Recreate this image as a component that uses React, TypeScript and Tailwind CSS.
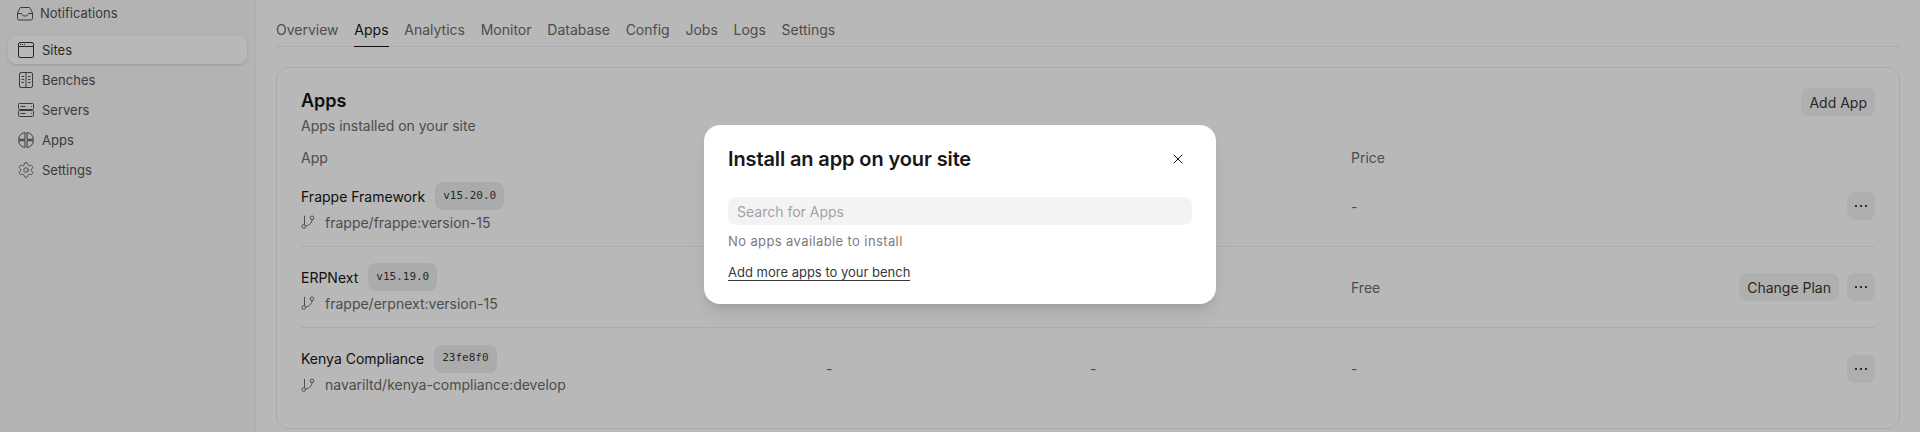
import { Settings, X } from 'lucide-react';

const tabs = ['Overview', 'Apps', 'Analytics', 'Monitor', 'Database', 'Config', 'Jobs', 'Logs', 'Settings'];

const apps = [
  { name: 'Frappe Framework', tag: 'v15.20.0', repo: 'frappe/frappe:version-15', middle: '', price: '-', changePlan: false },
  { name: 'ERPNext', tag: 'v15.19.0', repo: 'frappe/erpnext:version-15', middle: '', price: 'Free', changePlan: true },
  { name: 'Kenya Compliance', tag: '23fe8f0', repo: 'navariltd/kenya-compliance:develop', middle: '-', price: '-', changePlan: false },
];

const InboxIcon = () => (
  <svg width="16" height="16" viewBox="0 0 16 16" fill="none" stroke="currentColor" strokeWidth="1">
    <path d="M4 1.500h8c.6 0 1 .3 1.300.8L15.500 7v5.500a1.500 1.500 0 0 1-1.500 1.500H2a1.500 1.500 0 0 1-1.500-1.500V7l2.200-4.700c.3-.5.7-.8 1.300-.8z" />
    <path d="M.5 7.500h4c.5 1.700 1.800 2.500 3.500 2.500s3-.8 3.500-2.500h4" />
  </svg>
);

const SiteIcon = () => (
  <svg width="16" height="16" viewBox="0 0 16 16" fill="none" stroke="currentColor" strokeWidth="1">
    <rect x="0.500" y="0.500" width="15" height="15" rx="1.500" />
    <path d="M.5 4.500h15" />
    <path d="M2 2.500h1M4 2.500h1M6 2.500h1" />
  </svg>
);

const BenchIcon = () => (
  <svg width="16" height="16" viewBox="0 0 16 16" fill="none" stroke="currentColor" strokeWidth="1">
    <rect x="1.500" y="0.500" width="13" height="15" rx="1.500" />
    <path d="M8 .5v15M3.500 4.500h2.500M3.500 7.500h2.500M3.500 10.500h2.500M10 4.500h2.500M10 7.500h2.500M10 10.500h2.500" />
  </svg>
);

const ServerIcon = () => (
  <svg width="16" height="16" viewBox="0 0 16 16" fill="none" stroke="currentColor" strokeWidth="1">
    <rect x="0.500" y="1.500" width="15" height="6" rx="1" />
    <rect x="0.500" y="8.500" width="15" height="6" rx="1" />
    <path d="M2.500 4.500h5M2.500 11.500h5M13 4.500h.8M13 11.500h.8" />
  </svg>
);

const AppsIcon = () => (
  <svg width="16" height="16" viewBox="0 0 16 16" fill="none" stroke="currentColor" strokeWidth="1">
    <path d="M7 .6A7.500 7.500 0 0 0 .6 7.300H7z" />
    <path d="M9 .6a7.500 7.500 0 0 1 6.400 6.700H9z" />
    <path d="M7 15.400A7.500 7.500 0 0 1 .6 8.700H7z" />
    <path d="M9 15.400a7.500 7.500 0 0 0 6.400-6.700H9z" />
  </svg>
);

const BranchIcon = () => (
  <svg width="14" height="14" viewBox="0 0 14 14" fill="none" stroke="currentColor" strokeWidth="1">
    <circle cx="2.800" cy="11.500" r="1.800" />
    <circle cx="11" cy="2.800" r="1.800" />
    <path d="M3.500 .8v9" />
    <path d="M11 4.600c0 3.200-2 5.400-6.400 6.500" />
  </svg>
);

const DotsIcon = () => (
  <svg width="16" height="16" viewBox="0 0 16 16" fill="currentColor">
    <circle cx="3" cy="8" r="1.100" />
    <circle cx="8" cy="8" r="1.100" />
    <circle cx="13" cy="8" r="1.100" />
  </svg>
);

const nav = [
  { label: 'Sites', icon: <SiteIcon />, active: true },
  { label: 'Benches', icon: <BenchIcon />, active: false },
  { label: 'Servers', icon: <ServerIcon />, active: false },
  { label: 'Apps', icon: <AppsIcon />, active: false },
  { label: 'Settings', icon: <Settings size={18} strokeWidth={1.1} className="-mx-[1px]" />, active: false },
];

export default function App() {
  return (
    <div className="relative flex h-[432px] w-full overflow-hidden bg-white font-['Inter',sans-serif] text-[14px] text-[#383838]">
      <aside className="w-[256px] shrink-0 border-r border-[#f3f3f3] bg-[#f8f8f8] px-2 text-[13px]">
        <div className="flex h-[28px] items-center gap-[7px] pl-[9px] text-[#525252]">
          <InboxIcon />
          <span>Notifications</span>
        </div>
        <nav className="mt-[8px] flex flex-col gap-[2px]">
          {nav.map((item) => (
            <div
              key={item.label}
              className={
                item.active
                  ? 'flex h-[28px] items-center gap-2 rounded-lg bg-white pl-[10px] text-[#383838] shadow-sm'
                  : 'flex h-[28px] items-center gap-2 pl-[10px] text-[#525252]'
              }
            >
              {item.icon}
              <span className="pt-[1px]">{item.label}</span>
            </div>
          ))}
        </nav>
      </aside>

      <main className="min-w-0 flex-1 pl-[20px] pr-[20px] pt-[15px]">
        <div className="flex h-[32px] gap-[15.75px] border-b border-[#ededed]">
          {tabs.map((tab) => (
            <div
              key={tab}
              className={
                tab === 'Apps'
                  ? 'h-[32px] border-b border-[#171717] pt-[6px] leading-[18px] text-[#171717]'
                  : 'h-[32px] pt-[6px] leading-[18px] text-[#6b6b6b]'
              }
            >
              {tab}
            </div>
          ))}
        </div>

        <section className="mt-[20px] h-[362px] rounded-xl border border-[#ededed] px-[24px] pt-[20px]">
          <div className="flex items-start justify-between">
            <div className="pt-[1px]">
              <h2 className="text-lg font-semibold leading-[24px] text-[#171717]">Apps</h2>
              <p className="mt-[4px] leading-[18px] text-[#6b6b6b]">Apps installed on your site</p>
            </div>
            <button className="flex h-[28px] items-center rounded-lg bg-[#f3f3f3] px-2 text-[#383838]">Add App</button>
          </div>

          <div className="mt-[15px] grid h-[16px] grid-cols-[525px_264px_261px_1fr] items-center leading-[16px] text-[#6b6b6b]">
            <span>App</span>
            <span />
            <span />
            <span>Price</span>
          </div>

          <div>
            {apps.map((app) => (
              <div
                key={app.name}
                className="grid h-[81px] grid-cols-[525px_264px_261px_1fr] items-center border-b border-[#ededed] last:border-b-0"
              >
                <div className="pt-[2px]">
                  <div className="flex items-center gap-[10px] text-[#171717]">
                    <span>{app.name}</span>
                    <span className="flex h-[28px] items-center rounded-lg bg-[#ededed] px-2 font-['DejaVu_Sans_Mono',monospace] text-[11px] text-[#383838]">
                      {app.tag}
                    </span>
                  </div>
                  <div className="mt-[2px] flex h-[20px] items-center gap-[10px] text-[#6b6b6b]">
                    <BranchIcon />
                    <span>{app.repo}</span>
                  </div>
                </div>
                <span className="text-[#6b6b6b]">{app.middle}</span>
                <span className="text-[#6b6b6b]">{app.middle}</span>
                <div className="flex items-center justify-between">
                  <span className="text-[#6b6b6b]">{app.price}</span>
                  <div className="flex gap-2">
                    {app.changePlan && (
                      <button className="flex h-[28px] items-center rounded-lg bg-[#f3f3f3] px-2 text-[#383838]">Change Plan</button>
                    )}
                    <button className="flex h-[28px] w-[28px] items-center justify-center rounded-lg bg-[#f3f3f3] text-[#171717]">
                      <DotsIcon />
                    </button>
                  </div>
                </div>
              </div>
            ))}
          </div>
        </section>
      </main>

      {/* dialog backdrop */}
      <div className="absolute inset-0 bg-black/[0.28]" />

      {/* dialog */}
      <div className="absolute left-[704px] top-[125px] h-[179px] w-[512px] rounded-2xl bg-white px-6 pt-[20px] shadow-lg">
        <div className="flex h-[28px] items-center justify-between">
          <h3 className="text-xl font-semibold tracking-[-0.006em] text-[#171717]">Install an app on your site</h3>
          <X size={16} strokeWidth={1.5} className="mr-[6px] text-[#171717]" />
        </div>
        <div className="mt-[24px] flex h-[28px] items-center rounded-lg bg-[#f3f3f3] px-[9px] text-[#a3a3a3]">
          Search for Apps
        </div>
        <p className="mt-[7px] text-[13px] leading-[18px] tracking-[0.03em] text-[#7c7c7c]">No apps available to install</p>
        <a className="mt-[14px] inline-block border-b border-[#383838] text-[13px] leading-[16px] text-[#383838]">Add more apps to your bench</a>
      </div>
    </div>
  );
}
